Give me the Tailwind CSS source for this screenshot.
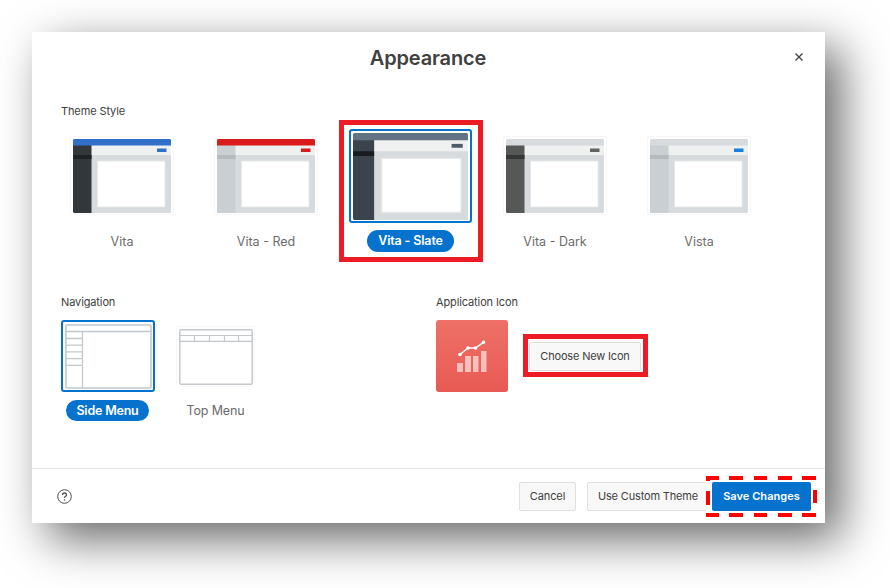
<!DOCTYPE html>
<html lang="en">
<head>
<meta charset="utf-8">
<title>Appearance</title>
<script src="https://cdn.jsdelivr.net/npm/@tailwindcss/browser@4"></script>
</head>
<body class="w-[890px] h-[588px] overflow-hidden bg-white p-8 font-['Inter','Liberation_Sans',sans-serif] text-[#404040]">
<main class="flex h-[491px] w-[793px] flex-col bg-white shadow-[16px_16px_44px_rgba(0,0,0,0.6)]">
  <header class="relative flex h-[53px] shrink-0 items-center justify-center">
    <h1 class="-mt-0.5 -ml-px text-[20px] leading-6 font-semibold tracking-[-0.15px]">Appearance</h1>
    <button class="absolute top-[20px] right-[21px]" aria-label="Close">
      <svg class="block size-[10px]" viewBox="0 0 10 10" stroke="#404040" stroke-width="1.300"><path d="M1.500 1.500 8.500 8.500M8.500 1.500 1.500 8.500"/></svg>
    </button>
  </header>

  <section class="h-[178px] shrink-0 pt-[18px]">
    <h2 class="pl-[29px] text-[11px] leading-4 tracking-[-0.12px]">Theme Style</h2>
    <div class="mt-px flex h-[142px] pl-[18px] text-[12.500px] leading-[22px] text-[#6b6b6b]">
      <div class="flex w-36 flex-col items-center">
        <div class="mt-4 flex h-[79px] w-[104px] items-center justify-center rounded-xs border border-[#f7f7f7]">
          <svg class="mt-px h-[74px] w-[98px]" viewBox="0 0 98 74"><rect width="98" height="74" rx="1" fill="#d7dbde"/><path fill="#eff1f1" d="M18 6H98V16H18z"/><path fill="#32373b" d="M0 6H18.500V74H1L0 73z"/><path fill="#1e2224" d="M0 16H18.500V20H0z"/><path fill="#3070cb" d="M0 1 1 0H97L98 1V6.500H0z"/><path fill="#3070cb" d="M84 9.500H93.500V13H84z"/><path fill="#fff" stroke="#e6e8e9" d="M24.500 22H92V68H24.500z"/></svg>
        </div>
        <span class="mt-[15.500px]">Vita</span>
      </div>
      <div class="flex w-36 flex-col items-center">
        <div class="mt-4 flex h-[79px] w-[104px] items-center justify-center rounded-xs border border-[#f7f7f7]">
          <svg class="mt-px h-[74px] w-[98px]" viewBox="0 0 98 74"><rect width="98" height="74" rx="1" fill="#d7dbde"/><path fill="#eff1f1" d="M18 6H98V16H18z"/><path fill="#c9cfd2" d="M0 6H18.500V74H1L0 73z"/><path fill="#b5babd" d="M0 16H18.500V20H0z"/><path fill="#da1b1b" d="M0 1 1 0H97L98 1V6.500H0z"/><path fill="#da1b1b" d="M84 9.500H93.500V13H84z"/><path fill="#fff" stroke="#e6e8e9" d="M24.500 22H92V68H24.500z"/></svg>
        </div>
        <span class="mt-[15.500px]">Vita - Red</span>
      </div>
      <div class="relative flex w-[145px] flex-col items-center">
        <div class="absolute top-0 left-px h-[142px] w-36 border-5 border-[#ed1c24]"></div>
        <div class="mt-[9px] flex h-[94px] w-[123px] items-center justify-center rounded-[3px] border-2 border-[#0572ce]">
          <svg class="h-[87px] w-[115px]" viewBox="0 0 98 74"><rect width="98" height="74" rx="1" fill="#d7dbde"/><path fill="#eff1f1" d="M18 6H98V15.500H18z"/><path fill="#3b444c" d="M0 6H18V74H1L0 73z"/><path fill="#181c21" d="M0 15.500H18V19.500H0z"/><path fill="#647383" d="M0 1 1 0H97L98 1V6.200H0z"/><path fill="#4c5b68" d="M84 9.200H93.500V12.500H84z"/><path fill="#fff" stroke="#e6e8e9" d="M24.500 21.500H92V67.500H24.500z"/></svg>
        </div>
        <span class="mt-[7px] flex h-[22px] w-[87px] items-center justify-center rounded-full bg-[#0572ce] font-semibold tracking-[-0.15px] text-white">Vita - Slate</span>
      </div>
      <div class="flex w-36 flex-col items-center">
        <div class="mt-4 flex h-[79px] w-[104px] items-center justify-center rounded-xs border border-[#f7f7f7]">
          <svg class="mt-px h-[74px] w-[98px]" viewBox="0 0 98 74"><rect width="98" height="74" rx="1" fill="#d7dbde"/><path fill="#eff1f1" d="M18 6.500H98V16H18z"/><path fill="#565857" d="M0 6.500H18.500V74H1L0 73z"/><path fill="#353736" d="M0 16H18.500V20H0z"/><path fill="#60635f" d="M84 9.500H93.500V13H84z"/><path fill="#fff" stroke="#e6e8e9" d="M24.500 22H92V68H24.500z"/></svg>
        </div>
        <span class="mt-[15.500px]">Vita - Dark</span>
      </div>
      <div class="flex w-36 flex-col items-center">
        <div class="mt-4 flex h-[79px] w-[104px] items-center justify-center rounded-xs border border-[#f7f7f7]">
          <svg class="mt-px h-[74px] w-[98px]" viewBox="0 0 98 74"><rect width="98" height="74" rx="1" fill="#d7dbde"/><path fill="#eff1f1" d="M18 6.500H98V16H18z"/><path fill="#c9cfd2" d="M0 6.500H18.500V74H1L0 73z"/><path fill="#b5babd" d="M0 16H18.500V20H0z"/><path fill="#1b7fe0" d="M84 9.500H93.500V13H84z"/><path fill="#fff" stroke="#e6e8e9" d="M24.500 22H92V68H24.500z"/></svg>
        </div>
        <span class="mt-[15.500px]">Vista</span>
      </div>
    </div>
  </section>

  <div class="flex flex-1 pt-[31px] pl-[29px]">
    <section class="w-[375px] shrink-0">
      <h2 class="text-[11px] leading-4 tracking-[-0.12px]">Navigation</h2>
      <div class="mt-[10px] flex text-[12.500px] leading-[22px] text-[#6b6b6b]">
        <div class="flex w-[94px] flex-col items-center">
          <div class="flex h-[72px] w-[94px] items-center justify-center rounded-[3px] border-2 border-[#0572ce]">
            <svg class="h-[65px] w-[87px]" viewBox="0 0 87 65" fill="none" stroke="#c3c8cc" stroke-width="1.300"><rect x="1" y="1" width="85" height="63" rx="1" stroke-width="1.600"/><path d="M1 7.500H86M17.500 7.500V64M1 14.500H17.500M1 21.200H17.500M1 27.900H17.500M1 34.600H17.500M1 41.300H17.500"/></svg>
          </div>
          <span class="mt-[8px] mr-px flex h-[21px] w-[83px] items-center justify-center rounded-full bg-[#0572ce] font-semibold tracking-[-0.2px] text-white">Side Menu</span>
        </div>
        <div class="ml-[21px] flex w-[79px] flex-col items-center">
          <div class="mt-[6px] flex h-[61px] w-[79px] items-center justify-center rounded-xs border border-[#f7f7f7]">
            <svg class="h-[56px] w-[74px]" viewBox="0 0 74 56" fill="none" stroke="#c3c8cc" stroke-width="1.200"><rect x=".8" y=".8" width="72.400" height="54.400" rx="1" stroke-width="1.500"/><path d="M1 6.500H73M1 12.400H73M15.500 6.500V12.400M30.500 6.500V12.400M45.500 6.500V12.400M59.500 6.500V12.400"/></svg>
          </div>
          <span class="mt-[13px] tracking-[-0.15px] whitespace-nowrap">Top Menu</span>
        </div>
      </div>
    </section>
    <section>
      <h2 class="text-[11px] leading-4 tracking-[-0.12px]">Application Icon</h2>
      <div class="mt-[10px] flex">
        <div class="h-[72px] w-[72px] rounded-[3px] bg-linear-to-b from-[#ee7067] to-[#e85a54]">
          <svg class="block size-[72px]" viewBox="0 0 72 72"><path fill="#fff" fill-opacity=".6" d="M21 43H27V52H21zM29 36H35V52H29zM37 36H42.500V52H37zM45 31H50.500V52H45z"/><path fill="none" stroke="#fff" stroke-width="1.500" d="M24 34.500 32 28H39.500L47.500 22.300"/><g fill="#fff"><circle cx="24" cy="34.500" r="1.800"/><circle cx="32" cy="28" r="1.800"/><circle cx="39.500" cy="28" r="1.800"/><circle cx="47.500" cy="22.300" r="1.800"/></g></svg>
        </div>
        <div class="mt-[14px] ml-[15px] h-[43px] w-[125px] border-5 border-[#ed1c24] pt-[3px] pl-px">
          <button class="flex h-[29px] w-[112px] items-center justify-center rounded-xs border border-[#dfdfdf] bg-[#f8f8f8] text-[11px] tracking-[-0.18px] whitespace-nowrap">Choose New Icon</button>
        </div>
      </div>
    </section>
  </div>

  <footer class="flex h-[55px] shrink-0 items-center border-t border-[#e5e5e5] pr-[14px] pl-[25px] text-[11px] tracking-[-0.16px]">
    <svg class="mr-auto size-[15px]" viewBox="0 0 15 15" fill="none" stroke="#505050"><circle cx="7.500" cy="7.500" r="6.800"/><path stroke-width="1.300" d="M5.500 6C5.500 4.600 6.300 4 7.500 4S9.500 4.700 9.500 5.900C9.500 7.400 7.500 7.300 7.500 9M7.500 10.200V11.400"/></svg>
    <button class="h-[29px] w-[57px] rounded-xs border border-[#dfdfdf] bg-[#f8f8f8] tracking-[-0.1px]">Cancel</button>
    <button class="ml-[11px] h-[29px] w-[122px] rounded-xs border border-[#dfdfdf] bg-[#f8f8f8] whitespace-nowrap">Use Custom Theme</button>
    <div class="relative ml-[3px]">
      <button class="block h-[29px] w-[99px] rounded-xs bg-[#0572ce] font-semibold tracking-[0.05px] whitespace-nowrap text-white">Save Changes</button>
      <svg class="absolute -top-[6px] -left-[6px] h-[41px] w-[111px]" viewBox="0 0 111 41"><path fill="#fff" d="M0 0H4V41H0z"/><path fill="#f00" d="M0 0H13V4H4V5H0zM23 0H37V4H23zM48 0H61V4H48zM72 0H86V4H72zM96 0H110V4H96zM0 37H13V41H0zM23 37H37V41H23zM48 37H61V41H48zM72 37H86V41H72zM96 37H110V41H96zM0 15H4V29H0zM107 14H111V27H107z"/></svg>
    </div>
  </footer>
</main>
</body>
</html>
